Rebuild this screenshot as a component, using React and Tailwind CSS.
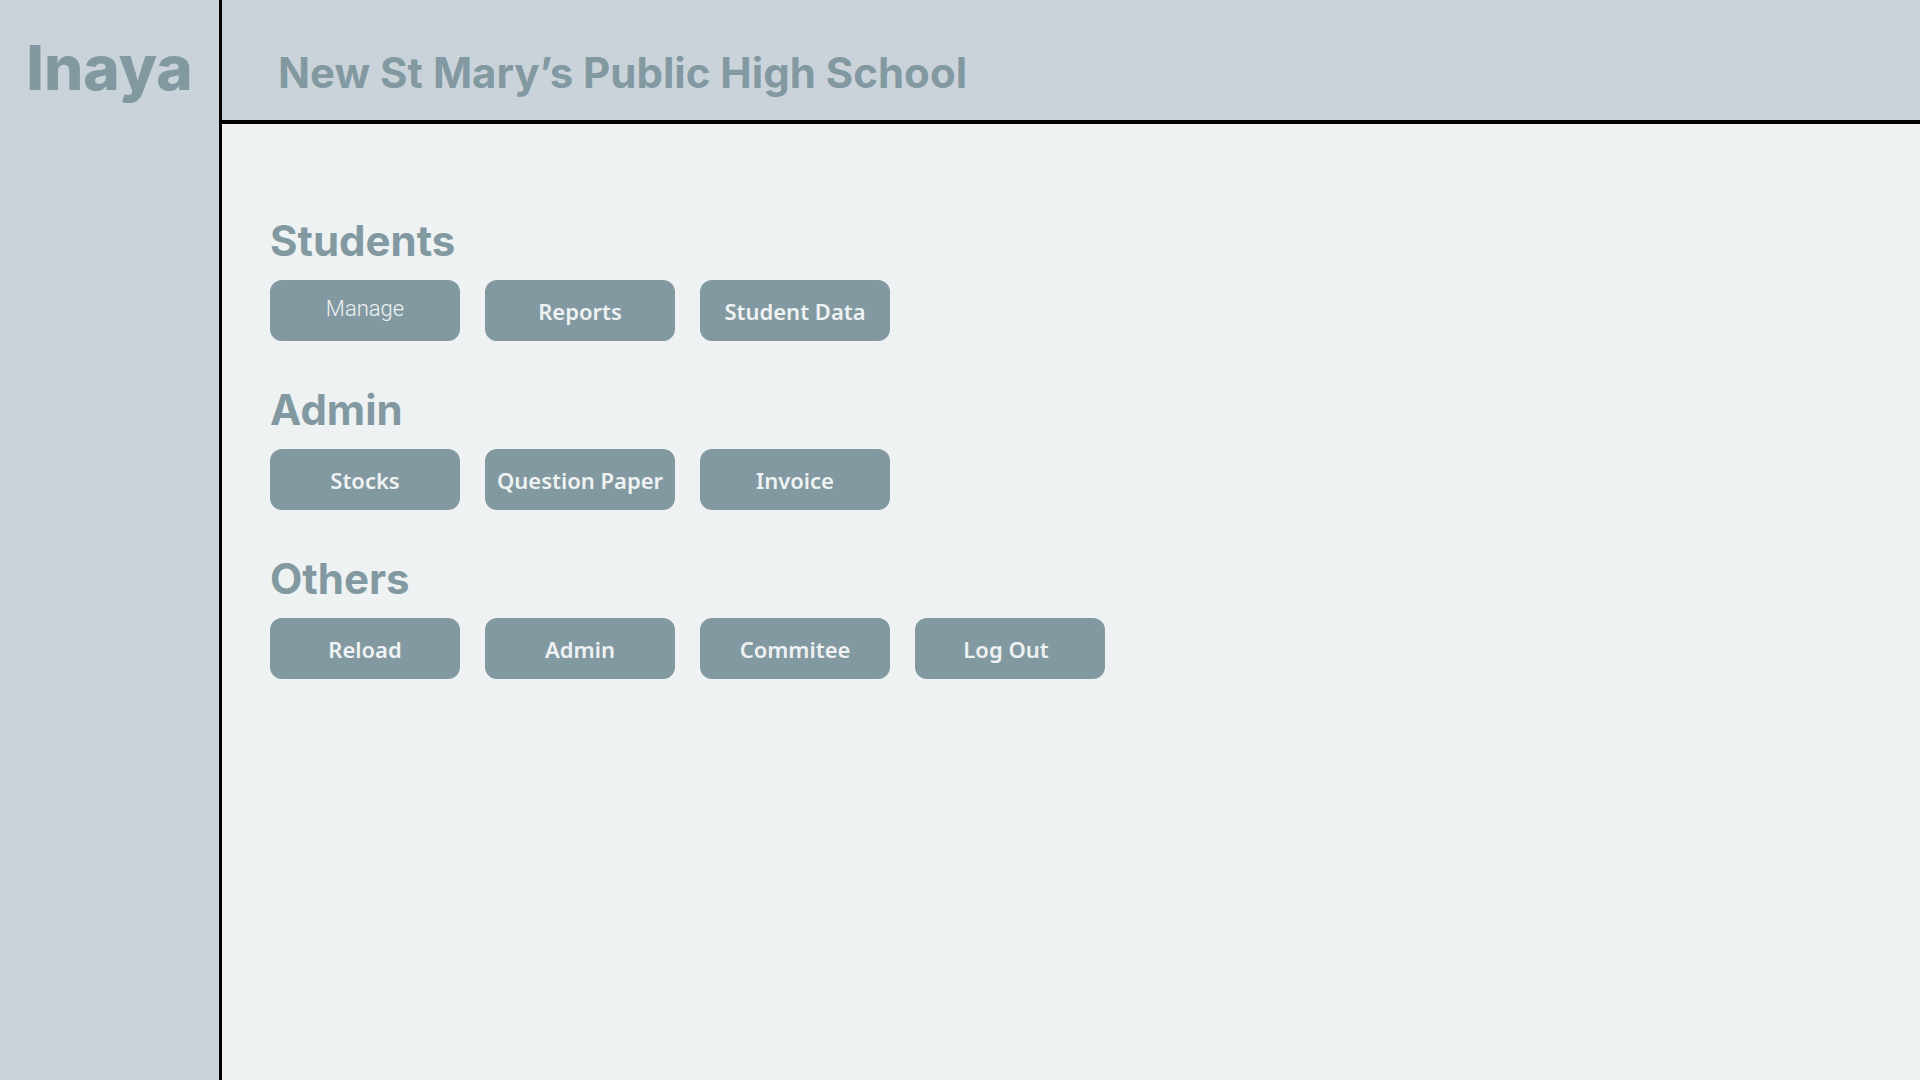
import React from "react";
import clsx from "clsx";

const sections = [
  {
    title: "Students",
    actions: [
      { label: "Manage", light: true },
      { label: "Reports" },
      { label: "Student Data" },
    ],
  },
  {
    title: "Admin",
    actions: [
      { label: "Stocks" },
      { label: "Question Paper" },
      { label: "Invoice" },
    ],
  },
  {
    title: "Others",
    actions: [
      { label: "Reload" },
      { label: "Admin" },
      { label: "Commitee" },
      { label: "Log Out", shifted: true },
    ],
  },
];

function ActionButton({ label, light, shifted }) {
  return (
    <button
      type="button"
      className={clsx(
        "w-[190px] h-[61px] rounded-xl bg-[#8299a1] text-[#eef2f3] text-[22px] leading-7 whitespace-nowrap cursor-pointer",
        light
          ? "font-['Roboto',sans-serif] font-light pb-1"
          : "font-['Noto_Sans',sans-serif] font-semibold",
        shifted && "pr-2"
      )}
    >
      {label}
    </button>
  );
}

function Section({ title, actions }) {
  return (
    <section>
      <h2 className="text-[42px] leading-[50px] font-bold text-[#8299a1]">{title}</h2>
      <div className="mt-[14px] flex flex-wrap gap-[25px]">
        {actions.map((action) => (
          <ActionButton key={action.label} {...action} />
        ))}
      </div>
    </section>
  );
}

function App() {
  return (
    <div className="min-h-screen flex bg-[#eef2f3] font-['Inter',sans-serif]">
      {/* Sidebar */}
      <aside className="w-[222px] shrink-0 border-r-3 border-black bg-[#cbd3da] pt-8 text-center">
        <div className="text-[62px] leading-[72px] font-extrabold text-[#8299a1]">Inaya</div>
      </aside>

      <div className="flex-1 min-w-0">
        {/* Header */}
        <header className="h-[124px] border-b-4 border-black bg-[#cbd3da] pt-12 pl-14">
          <h1 className="text-[42px] leading-[50px] font-bold text-[#8299a1]">
            New St Mary’s Public High School
          </h1>
        </header>

        {/* Actions */}
        <main className="flex flex-col gap-11 pt-[92px] px-12">
          {sections.map((section) => (
            <Section key={section.title} {...section} />
          ))}
        </main>
      </div>
    </div>
  );
}

export default App;
